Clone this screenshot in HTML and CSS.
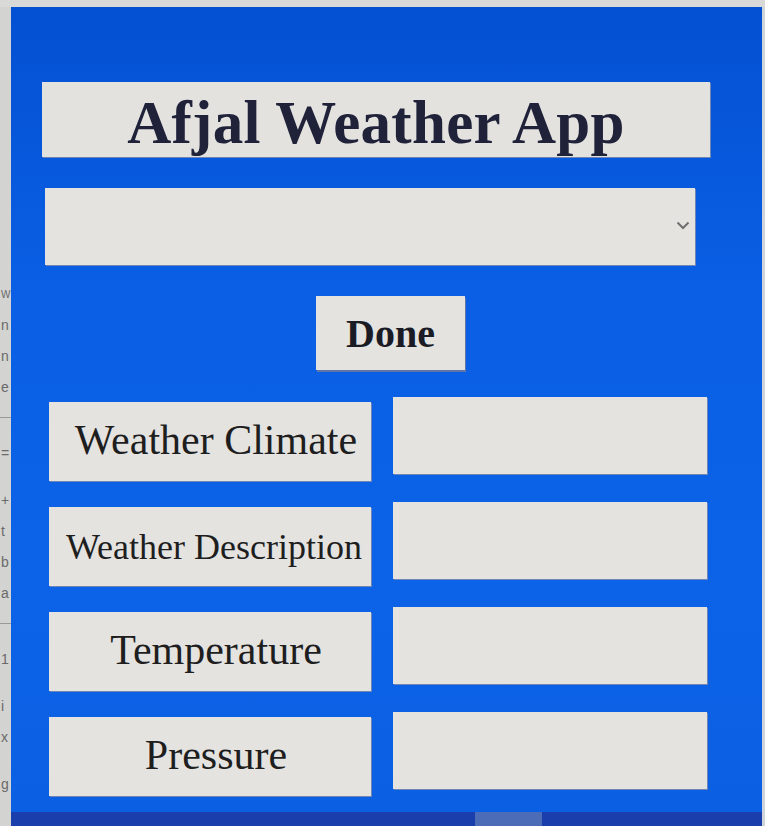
FILE: index.html
```html
<!DOCTYPE html>
<html lang="en">
<head>
<meta charset="utf-8">
<title>Afjal Weather App</title>
<link rel="stylesheet" href="styles.css">
</head>
<body>
<div class="top-strip"></div>
<div class="stage">
  <div class="side-strip">
    <span class="ch narrow">W</span>
    <span class="ch">n</span>
    <span class="ch">n</span>
    <span class="ch">e</span>
    <span class="rule"></span>
    <span class="ch">=</span>
    <span class="ch gap">+</span>
    <span class="ch">t</span>
    <span class="ch">b</span>
    <span class="ch">a</span>
    <span class="rule"></span>
    <span class="ch">1</span>
    <span class="ch gap">i</span>
    <span class="ch">x</span>
    <span class="ch gap">g</span>
  </div>
  <div class="window">
    <div class="app">
      <div class="title">Afjal Weather App</div>
      <div class="combo">
        <svg class="chev" width="14" height="9" viewBox="0 0 14 9"><path d="M1.5 1.5 L7 7 L12.5 1.5" fill="none" stroke="#707070" stroke-width="2"/></svg>
      </div>
      <div class="done">Done</div>
      <div class="rows">
        <div class="label">Weather Climate</div>
        <div class="value"></div>
        <div class="label small">Weather Description</div>
        <div class="value"></div>
        <div class="label">Temperature</div>
        <div class="value"></div>
        <div class="label">Pressure</div>
        <div class="value"></div>
      </div>
    </div>
    <div class="taskbar"><span class="tb-item"></span></div>
  </div>
  <div class="right-strip"></div>
</div>
</body>
</html>
```

FILE: styles.css
```css
html, body {
  margin: 0;
  padding: 0;
}
body {
  width: 765px;
  height: 826px;
  overflow: hidden;
  background: #d6d6d4;
  font-family: "Liberation Serif", "Times New Roman", serif;
}
.top-strip {
  height: 7px;
  background: #d9d9d7;
}
.stage {
  display: flex;
  height: 819px;
}
.side-strip {
  width: 11px;
  flex: none;
  background: #d3d3d1;
  overflow: hidden;
  display: flex;
  flex-direction: column;
  padding-top: 272px;
  box-sizing: border-box;
}
.ch {
  display: block;
  height: 31px;
  font-family: "Liberation Sans", sans-serif;
  font-size: 14px;
  line-height: 31px;
  color: #6a6a6a;
  padding-left: 1px;
}
.ch.narrow { font-size: 10px; }
.gap { margin-top: 16px; }
.rule {
  display: block;
  height: 1px;
  width: 11px;
  background: #9a9a9a;
  margin: 14px 0 20px;
}
.window {
  width: 751px;
  flex: none;
  display: flex;
  flex-direction: column;
  background: linear-gradient(180deg, #0450d2 0%, #0a5fe4 35%, #0c63e8 70%, #0b5fe2 100%);
}
.right-strip {
  flex: 1;
  background: #cfd3da;
}
.app {
  flex: 1;
  display: flex;
  flex-direction: column;
  align-items: flex-start;
}
.title {
  margin: 75px 0 0 31px;
  width: 668px;
  height: 75px;
  background: #e3e2df;
  box-shadow: 1px 1px 0 #6f86b4;
  color: #20223a;
  font-weight: bold;
  font-size: 61px;
  line-height: 82px;
  text-align: center;
  letter-spacing: 0.3px;
}
.combo {
  margin: 31px 0 0 34px;
  width: 650px;
  height: 77px;
  background: #e4e3e0;
  box-shadow: 1px 1px 0 #6f86b4;
  display: flex;
  align-items: center;
  justify-content: flex-end;
  padding-right: 5px;
  box-sizing: border-box;
}
.chev { display: block; margin-bottom: 2px; }
.done {
  margin: 31px 0 0 305px;
  width: 149px;
  height: 74px;
  background: #e4e3e0;
  box-shadow: 1px 2px 0 #5f76a6;
  color: #1b1b26;
  font-weight: bold;
  font-size: 40px;
  line-height: 76px;
  text-align: center;
}
.rows {
  margin: 27px 0 0 38px;
  display: grid;
  grid-template-columns: 322px 314px;
  column-gap: 22px;
  row-gap: 21px;
  align-items: start;
}
.label {
  margin-top: 5px;
  height: 79px;
  padding-left: 12px;
  box-sizing: border-box;
  background: #e4e3e0;
  box-shadow: 1px 1px 0 #6f86b4;
  color: #1e1e1e;
  font-size: 42px;
  line-height: 76px;
  text-align: center;
  white-space: nowrap;
}
.label.small {
  font-size: 36px;
  line-height: 80px;
  text-align: right;
  padding-left: 0;
  padding-right: 9px;
}
.value {
  height: 77px;
  background: #e4e3e0;
  box-shadow: 1px 1px 0 #6f86b4;
}
.taskbar {
  height: 14px;
  background: #1a3eab;
  display: flex;
  padding-left: 464px;
}
.tb-item {
  width: 67px;
  background: #4c6cb8;
}
```
